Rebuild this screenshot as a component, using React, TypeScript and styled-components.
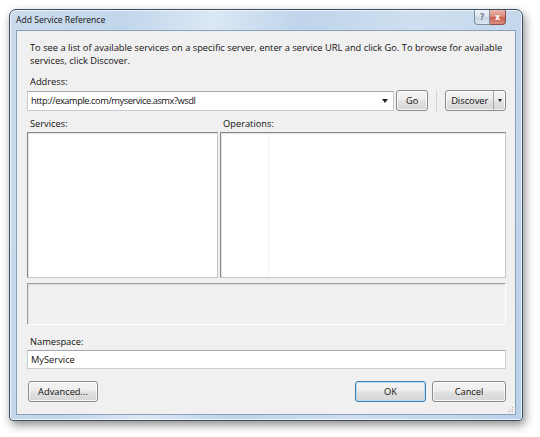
import React from "react";
import styled, { createGlobalStyle } from "styled-components";

const GlobalStyle = createGlobalStyle`
  html, body {
    margin: 0;
    padding: 0;
    background: #ffffff;
  }
  body {
    font-family: "Open Sans", "Noto Sans", sans-serif;
    font-size: 9.3px;
    color: #111;
  }
`;

const Page = styled.div`
  width: 540px;
  height: 437px;
  padding: 9px 0 0 9px;
  box-sizing: border-box;
  overflow: hidden;
`;

const Window = styled.div`
  width: 514px;
  height: 412px;
  box-sizing: border-box;
  border: 1px solid #3d4f63;
  border-radius: 7px 7px 4px 4px;
  background: linear-gradient(
    100deg,
    #cbdbed 0%,
    #c2d6eb 20%,
    #dbe8f5 35%,
    #bfd4ea 50%,
    #cfdff0 70%,
    #bcd2e9 100%
  );
  box-shadow: 2px 4px 10px rgba(0, 0, 0, 0.45), inset 0 0 0 1px rgba(255, 255, 255, 0.7);
  display: flex;
  flex-direction: column;
`;

const TitleBar = styled.div`
  height: 20px;
  display: flex;
  align-items: flex-start;
  justify-content: space-between;
  padding: 0 16px 0 6px;
`;

const Title = styled.span`
  font-size: 8.6px;
  line-height: 21px;
  color: #111;
`;

const CaptionButtons = styled.div`
  display: flex;
`;

const CaptionButton = styled.div<{ $close?: boolean }>`
  width: 16px;
  height: 15px;
  box-sizing: border-box;
  border: 1px solid ${(p) => (p.$close ? "#8a5050" : "#7f8e9f")};
  border-top: none;
  border-radius: ${(p) => (p.$close ? "0 0 4px 0" : "0 0 0 4px")};
  ${(p) => (p.$close ? "border-left: none;" : "")}
  background: ${(p) =>
    p.$close
      ? "linear-gradient(#eab7ae 0%, #dc8a7b 45%, #cc5f4d 55%, #d98e7f 100%)"
      : "linear-gradient(#eef3f8 0%, #dbe5ef 45%, #c8d5e3 55%, #dde7f1 100%)"};
  display: flex;
  align-items: center;
  justify-content: center;
  color: ${(p) => (p.$close ? "#fff" : "#7a8594")};
  font-family: "DejaVu Sans", sans-serif;
  font-size: 8px;
  font-weight: bold;
`;

const Client = styled.div`
  flex: 1;
  margin: 0 6px 5px 6px;
  border: 1px solid #8aa0b8;
  background: #f0f0f0;
  padding: 10px 9px 0 10px;
  display: flex;
  flex-direction: column;
  position: relative;
`;

const Description = styled.p`
  margin: 0 0 0 3px;
  line-height: 13px;
  white-space: nowrap;
`;

const Label = styled.div<{ $top: number }>`
  margin: ${(p) => p.$top}px 0 0 3px;
  line-height: 13px;
  height: 13px;
`;

const AddressRow = styled.div`
  display: flex;
  align-items: center;
  margin-top: 2px;
  height: 21px;
`;

const Combo = styled.div`
  width: 368px;
  height: 20px;
  box-sizing: border-box;
  border: 1px solid #c3cad2;
  border-top-color: #a3aab2;
  background: #fff;
  display: flex;
  align-items: center;
  padding-left: 3px;
`;

const ComboText = styled.span`
  flex: 1;
  letter-spacing: -0.45px;
`;

const Arrow = styled.span`
  width: 0;
  height: 0;
  border-left: 3.5px solid transparent;
  border-right: 3.5px solid transparent;
  border-top: 4px solid #222;
  margin-right: 5px;
`;

const Button = styled.div<{ $w: number; $default?: boolean }>`
  width: ${(p) => p.$w}px;
  height: 21px;
  box-sizing: border-box;
  border: 1px solid ${(p) => (p.$default ? "#3c7fb1" : "#8a8a8a")};
  border-radius: 3px;
  background: linear-gradient(#f4f4f4 0%, #ededed 48%, #e1e1e1 52%, #d6d6d6 100%);
  box-shadow: inset 0 0 0 1px ${(p) => (p.$default ? "#b5def4" : "rgba(255,255,255,0.8)")};
  display: flex;
  align-items: center;
  justify-content: center;
  color: #111;
`;

const Separator = styled.div`
  width: 1px;
  height: 20px;
  background: #d0d0d0;
  margin: 0 8px 0 8px;
`;

const SplitButton = styled(Button)`
  justify-content: flex-start;
  padding-left: 5px;
`;

const SplitLabel = styled.span`
  flex: 1;
`;

const SplitArrow = styled.span`
  width: 11px;
  height: 100%;
  border-left: 1px solid #a8a8a8;
  display: flex;
  align-items: center;
  justify-content: center;

  &::after {
    content: "";
    border-left: 2.5px solid transparent;
    border-right: 2.5px solid transparent;
    border-top: 3px solid #222;
  }
`;

const ListHeaders = styled.div`
  display: grid;
  grid-template-columns: 193px 1fr;
  margin-top: 6px;
`;

const ListRow = styled.div`
  display: grid;
  grid-template-columns: 191px 1fr;
  gap: 2px;
  height: 146px;
  margin-top: 2px;
`;

const ListBox = styled.div<{ $column?: number }>`
  box-sizing: border-box;
  border: 1px solid #828790;
  border-color: #828790 #c6c6c6 #c6c6c6 #828790;
  box-shadow: inset 1px 1px 0 #e3e3e3;
  background: ${(p) =>
    p.$column
      ? `linear-gradient(90deg, #fff ${p.$column}px, #f3f3f3 ${p.$column}px, #f3f3f3 ${
          p.$column + 1
        }px, #fff ${p.$column + 1}px)`
      : "#fff"};
`;

const StatusPanel = styled.div`
  margin-top: 5px;
  height: 42px;
  box-sizing: border-box;
  border-top: 1px solid #a0a0a0;
  border-left: 1px solid #a0a0a0;
  border-right: 1px solid #ffffff;
  border-bottom: 1px solid #ffffff;
  box-shadow: inset 1px 1px 0 #dcdcdc;
  background: #f0f0f0;
`;

const TextInput = styled.div`
  height: 19px;
  box-sizing: border-box;
  border: 1px solid #c8ced4;
  border-top-color: #a3aab2;
  background: #fff;
  padding-left: 3px;
  line-height: 17px;
  margin-top: 2px;
`;

const ButtonRow = styled.div`
  display: flex;
  align-items: center;
  margin-top: 12px;
`;

const Spacer = styled.div`
  flex: 1;
`;

const Grip = styled.svg`
  position: absolute;
  right: 1px;
  bottom: 1px;
`;

export default function App() {
  return (
    <>
      <GlobalStyle />
      <Page>
        <Window>
          <TitleBar>
            <Title>Add Service Reference</Title>
            <CaptionButtons>
              <CaptionButton>?</CaptionButton>
              <CaptionButton $close>x</CaptionButton>
            </CaptionButtons>
          </TitleBar>
          <Client>
            <Description>
              To see a list of available services on a specific server, enter a service URL and
              click Go. To browse for available
              <br />
              services, click Discover.
            </Description>
            <Label $top={8}>Address:</Label>
            <AddressRow>
              <Combo>
                <ComboText>http://example.com/myservice.asmx?wsdl</ComboText>
                <Arrow />
              </Combo>
              <Button $w={32} style={{ marginLeft: 2 }}>
                Go
              </Button>
              <Separator />
              <SplitButton $w={61}>
                <SplitLabel>Discover</SplitLabel>
                <SplitArrow />
              </SplitButton>
            </AddressRow>
            <ListHeaders>
              <Label $top={0}>Services:</Label>
              <Label $top={0}>Operations:</Label>
            </ListHeaders>
            <ListRow>
              <ListBox />
              <ListBox $column={47} />
            </ListRow>
            <StatusPanel />
            <Label $top={10}>Namespace:</Label>
            <TextInput>MyService</TextInput>
            <ButtonRow>
              <Button $w={70} style={{ marginLeft: 1 }}>
                Advanced...
              </Button>
              <Spacer />
              <Button $w={71} $default>
                OK
              </Button>
              <Button $w={74} style={{ marginLeft: 6 }}>
                Cancel
              </Button>
            </ButtonRow>
            <Grip width="8" height="8" viewBox="0 0 8 8">
              <rect x="6" y="2" width="1" height="1" fill="#b0b0b0" />
              <rect x="4" y="4" width="1" height="1" fill="#b0b0b0" />
              <rect x="6" y="4" width="1" height="1" fill="#b0b0b0" />
              <rect x="2" y="6" width="1" height="1" fill="#b0b0b0" />
              <rect x="4" y="6" width="1" height="1" fill="#b0b0b0" />
              <rect x="6" y="6" width="1" height="1" fill="#b0b0b0" />
            </Grip>
          </Client>
        </Window>
      </Page>
    </>
  );
}
